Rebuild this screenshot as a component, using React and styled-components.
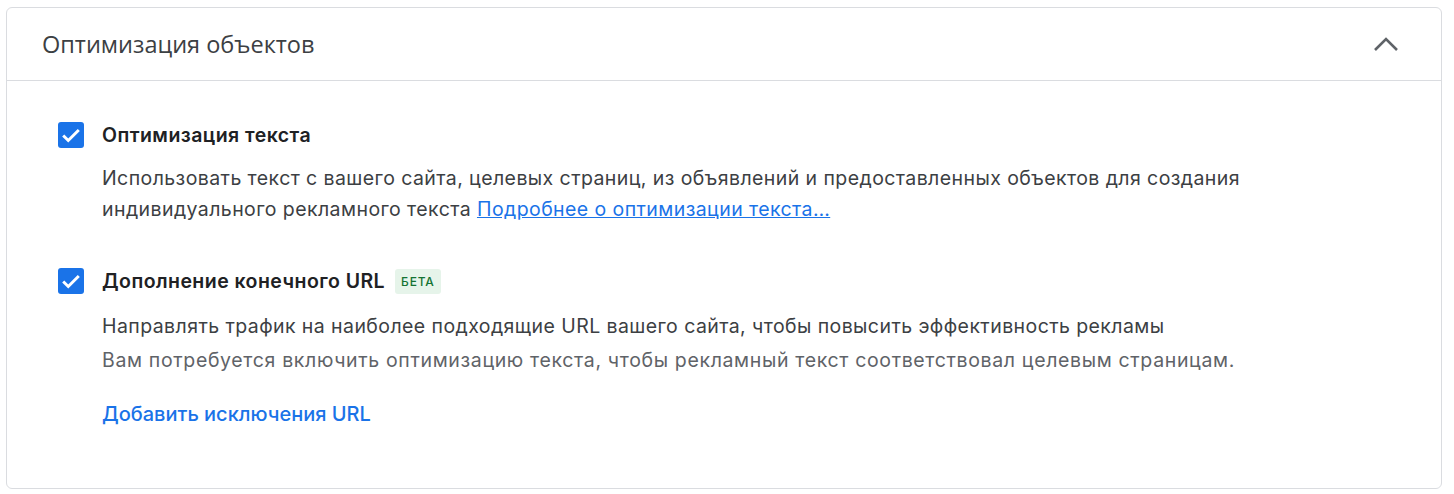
import styled, { createGlobalStyle } from "styled-components";

const Global = createGlobalStyle`
    body {
        margin: 0;
        background: #fff;
        font-family: Inter, Roboto, "Noto Sans", sans-serif;
        color: #3c4043;
    }
`

const Card = styled.div`
    margin: 7px 12px 0 6px;
    height: 482px;
    box-sizing: border-box;
    border: 1px solid #dadce0;
    border-radius: 6px;
    display: flex;
    flex-direction: column;
`

const Header = styled.div`
    height: 73px;
    box-sizing: border-box;
    border-bottom: 1px solid #dadce0;
    display: flex;
    align-items: center;
    justify-content: space-between;
    padding: 0 42px 0 35px;
`

const Title = styled.div`
    font-family: "Open Sans", Roboto, sans-serif;
    font-size: 23.5px;
    color: #3c4043;
`

const Body = styled.div`
    padding: 40px 0 0 51px;
    display: flex;
    flex-direction: column;
    gap: 42px;
`

const Option = styled.div`
    display: grid;
    grid-template-columns: 44px 1fr;
    align-items: start;
`

const Box = styled.div`
    width: 26px;
    height: 26px;
    border-radius: 3px;
    background: #1a73e8;
    display: flex;
    align-items: center;
    justify-content: center;
    margin-top: 1px;
`

const Label = styled.div`
    display: flex;
    align-items: center;
    gap: 10px;
    font-size: 19.5px;
    font-weight: 600;
    letter-spacing: 0.45px;
    color: #202124;
    height: 28px;
`

const Badge = styled.span`
    font-size: 12px;
    font-weight: 500;
    letter-spacing: 0.8px;
    color: #137333;
    background: #e6f4ea;
    border-radius: 3px;
    padding: 5px 6px;
`

const Desc = styled.div`
    grid-column: 2;
    margin-top: ${p => p.$mt || 0}px;
    font-size: 19.5px;
    letter-spacing: ${p => p.$muted ? 0.65 : 0.42}px;
    line-height: 31px;
    color: ${p => p.$muted ? "#5f6368" : "#3c4043"};
`

const Link = styled.a`
    color: #1a73e8;
    text-decoration: underline;
`

const Action = styled.div`
    grid-column: 2;
    margin-top: 26px;
    font-size: 20px;
    font-weight: 500;
    color: #1a73e8;
`

const Check = () => (
    <Box>
        <svg width="22" height="22" viewBox="0 0 24 24">
            <path d="M3.5 12.5l5.5 5.5L20.5 6.5" fill="none" stroke="#fff" strokeWidth="3.2" />
        </svg>
    </Box>
)

export default function App() {
    return <>
        <Global />
        <Card>
            <Header>
                <Title>Оптимизация объектов</Title>
                <svg width="26" height="16" viewBox="0 0 26 16">
                    <path d="M2 14L13 3l11 11" fill="none" stroke="#5f6368" strokeWidth="2.6" />
                </svg>
            </Header>
            <Body>
                <Option>
                    <Check />
                    <Label>Оптимизация текста</Label>
                    <Desc $mt={14}>
                        Использовать текст с вашего сайта, целевых страниц, из объявлений и предоставленных объектов для создания<br />
                        индивидуального рекламного текста <Link href="#">Подробнее о оптимизации текста…</Link>
                    </Desc>
                </Option>
                <Option>
                    <Check />
                    <Label>Дополнение конечного URL <Badge>БЕТА</Badge></Label>
                    <Desc $mt={16}>Направлять трафик на наиболее подходящие URL вашего сайта, чтобы повысить эффективность рекламы</Desc>
                    <Desc $muted $mt={3}>Вам потребуется включить оптимизацию текста, чтобы рекламный текст соответствовал целевым страницам.</Desc>
                    <Action>Добавить исключения URL</Action>
                </Option>
            </Body>
        </Card>
    </>
}
